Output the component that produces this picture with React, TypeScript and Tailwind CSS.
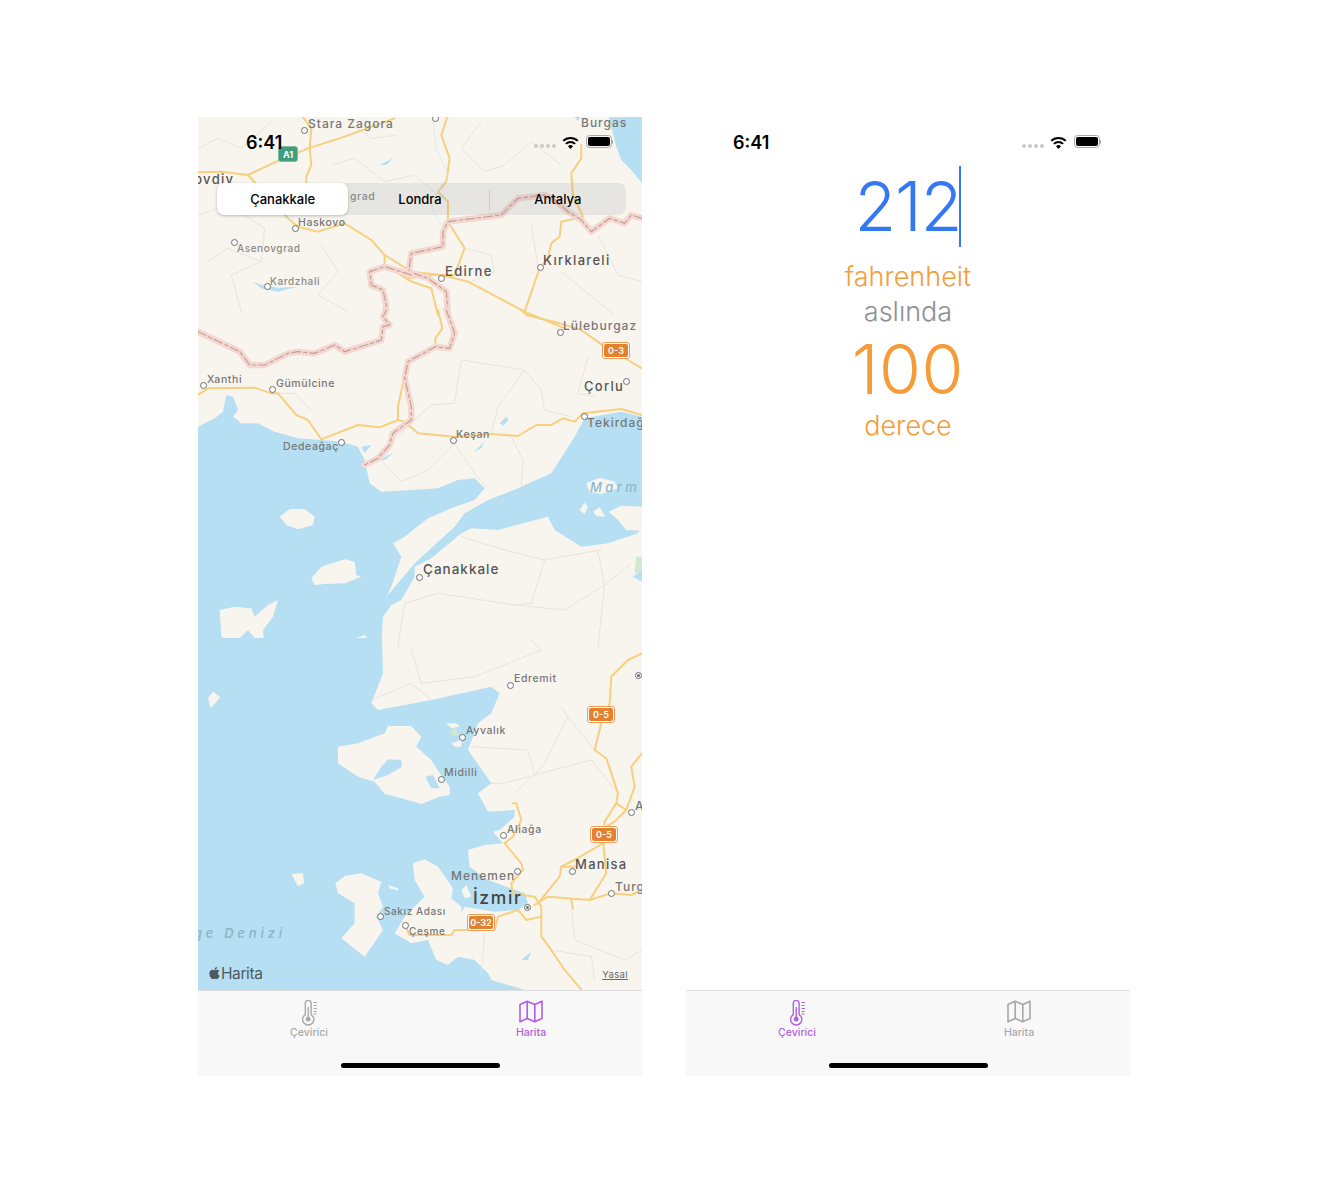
import { FaApple } from "react-icons/fa";

type MapLabel = { text: string; x: number; y: number; size?: number; cls?: string };
type Pin = { x: number; y: number; target?: boolean };

// all page coordinates, the map starts at 198,117
const labels: MapLabel[] = [
    { text: "Stara Zagora", x: 308, y: 124, size: 12 },
    { text: "Burgas", x: 581, y: 123, size: 12 },
    { text: "Plovdiv", x: 180, y: 179, size: 13, cls: "text-[#555]" },
    { text: "grad", x: 350, y: 197, size: 10.5, cls: "text-[#8f8f8c]" },
    { text: "Haskovo", x: 298, y: 223, size: 10.5 },
    { text: "Asenovgrad", x: 237, y: 248, size: 10, cls: "text-[#8a8a88]" },
    { text: "Kardzhali", x: 270, y: 281, size: 10, cls: "text-[#8a8a88]" },
    { text: "Edirne", x: 445, y: 271, size: 13, cls: "text-[#555]" },
    { text: "Kırklareli", x: 543, y: 260, size: 13, cls: "text-[#555]" },
    { text: "Lüleburgaz", x: 563, y: 326, size: 12 },
    { text: "Çorlu", x: 584, y: 386, size: 13, cls: "text-[#555]" },
    { text: "Xanthi", x: 207, y: 380, size: 10.5 },
    { text: "Gümülcine", x: 276, y: 384, size: 10.5 },
    { text: "Keşan", x: 456, y: 435, size: 10.5 },
    { text: "Tekirdağ", x: 587, y: 423, size: 12 },
    { text: "Dedeağaç", x: 283, y: 447, size: 10.5 },
    { text: "Çanakkale", x: 423, y: 570, size: 13.5, cls: "text-[#555]" },
    { text: "Edremit", x: 514, y: 679, size: 10.5 },
    { text: "Ayvalık", x: 466, y: 731, size: 10.5 },
    { text: "Midilli", x: 444, y: 773, size: 10.5 },
    { text: "Aliağa", x: 507, y: 830, size: 10.5 },
    { text: "Manisa", x: 575, y: 864, size: 13, cls: "text-[#555]" },
    { text: "Menemen", x: 451, y: 876, size: 12 },
    { text: "İzmir", x: 473, y: 898, size: 17.5, cls: "text-[#444]" },
    { text: "Turgutlu", x: 615, y: 887, size: 12 },
    { text: "Akhisar", x: 635, y: 806, size: 12 },
    { text: "Sakız Adası", x: 384, y: 911, size: 10 },
    { text: "Çeşme", x: 409, y: 931, size: 10 },
];

const pins: Pin[] = [
    { x: 304, y: 130 }, { x: 435, y: 118 }, { x: 295, y: 228 }, { x: 234, y: 242 },
    { x: 267, y: 286 }, { x: 441, y: 278 }, { x: 540, y: 267 }, { x: 560, y: 332 },
    { x: 626, y: 381 }, { x: 203, y: 385 }, { x: 272, y: 389 }, { x: 453, y: 440 },
    { x: 584, y: 416 }, { x: 341, y: 442 }, { x: 419, y: 577 }, { x: 510, y: 685 },
    { x: 462, y: 737 }, { x: 441, y: 779 }, { x: 503, y: 835 }, { x: 572, y: 871 },
    { x: 517, y: 871 }, { x: 611, y: 893 }, { x: 631, y: 812 }, { x: 380, y: 916 },
    { x: 405, y: 925 }, { x: 527, y: 907, target: true }, { x: 638, y: 675, target: true },
];

const shields = [
    { text: "0-3", x: 616, y: 350, w: 28 },
    { text: "0-5", x: 601, y: 714, w: 28 },
    { text: "0-5", x: 604, y: 834, w: 28 },
    { text: "0-32", x: 481, y: 922, w: 28 },
];

const ROAD = "#f6cf7f";
const GRID = "#e7e4dc";

// wider spacing on the bigger city names
const spacing = (size = 10) => (size >= 17 ? 1.6 : size === 13 ? 1.3 : size >= 12 ? 1 : 0.6);

const Line = ({ p, c = ROAD, w = 6, dash }: { p: string; c?: string; w?: number; dash?: string }) => (
    <polyline points={p} fill="none" stroke={c} strokeWidth={w} strokeLinejoin="round" strokeLinecap="round" strokeDasharray={dash} />
);

const Border = ({ p }: { p: string }) => (
    <>
        <Line p={p} c="#f3d8d2" w={19} />
        <Line p={p} c="#c99c92" w={3.5} dash="26 9 10 9" />
    </>
);

const MapArt = () => (
    <svg className="absolute inset-0 w-[444px] h-[873px] blur-[0.4px]" viewBox="0 0 444 873">
        <rect x="-5" y="-5" width="454" height="883" fill="#f8f5ef" />

        {/* top part, north of the coast */}
        <g transform="translate(0,-2) scale(0.3333)">
            <polygon points="1232,0 1238,30 1255,95 1270,135 1300,165 1332,205 1332,0" fill="#b6dff3" />
            <polygon points="1125,0 1150,0 1140,18" fill="#b6dff3" />
            <polygon points="545,150 585,130 565,150" fill="#b6dff3" />
            <polygon points="165,500 190,520 240,530 300,515 240,518 190,510" fill="#b6dff3" />
            <Line p="0,100 60,70 130,100 220,20" c={GRID} w={3} />
            <Line p="400,150 470,130 560,200 650,180 720,240" c={GRID} w={3} />
            <Line p="850,20 790,100 860,170 920,150 1000,80 1090,150" c={GRID} w={3} />
            <Line p="0,300 90,270 200,340 190,440 100,480 130,590" c={GRID} w={3} />
            <Line p="370,390 420,470 360,540 450,590" c={GRID} w={3} />
            <Line p="800,400 880,420 890,470 820,500" c={GRID} w={3} />
            <Line p="1000,330 1020,450" c={GRID} w={3} />
            <Line p="1200,360 1260,480 1332,500" c={GRID} w={3} />
            <Line p="1090,470 1200,560 1250,600" c={GRID} w={3} />
            <Line p="450,20 520,70 600,60" c={GRID} w={3} />
            <Line p="30,440 90,400 190,440" c={GRID} w={3} />
            <Line p="0,172 70,170 150,180 235,140 330,100 440,65 590,10" />
            <Line p="310,0 340,40 335,100 340,150 325,185 325,290" />
            <Line p="150,180 270,310 300,335 360,350 440,325 520,375 560,420 640,470 730,480" />
            <Line p="750,0 730,60 755,130 745,200 720,230 750,260 750,320 800,400 770,480 700,480 630,490" />
            <Line p="1150,90 1150,130 1120,175 1125,240 1155,305 1090,320 1085,365 1060,385 1050,430 1025,460 980,590" />
            <Line p="730,480 810,500 980,590 1100,640" />
            <Line p="560,420 560,450 640,500 700,520 720,600" />
            <Line p="705,20 715,100 750,180 720,230 700,280 730,330" c="#cfe6f2" w={2} />
            <Border p="1332,310 1300,300 1280,325 1235,310 1180,350 1150,315 1110,290 1070,255 1040,240 960,250 910,300 830,310 750,320 735,350 735,395 640,415 632,470 690,490 745,530 750,600" />
            <Border p="640,480 560,455 515,470 520,510 555,525 565,570 560,600" />
        </g>

        {/* middle part, Saros, Gelibolu and Marmara */}
        <g transform="translate(0,193) scale(0.3333)">
            <polygon fill="#b6dff3" points="0,350 50,325 75,305 85,255 105,260 120,300 105,320 130,340 180,340 230,365 300,385 370,390 430,395 480,410 500,450 515,520 550,545 640,540 720,535 780,510 830,505 860,535 830,570 760,595 690,625 620,680 585,700 610,740 580,830 565,860 600,820 650,760 770,650 800,610 870,570 960,535 1060,490 1130,380 1160,325 1270,305 1332,320 1332,650 1320,670 1230,700 1150,710 1070,660 1050,620 900,660 820,655 790,670 700,745 650,770 650,800 610,870 580,885 555,920 550,1010 0,1010" />
            <polygon fill="#f8f5ef" points="245,620 275,597 320,597 350,620 345,645 300,658 265,645" />
            <polygon fill="#f8f5ef" points="340,805 370,770 440,748 470,755 475,795 490,800 440,820 380,822 350,825" />
            <polygon fill="#f8f5ef" points="65,900 110,890 160,895 170,920 210,885 240,870 225,920 195,960 200,1010 170,985 150,960 110,1000 70,980" />
            <polygon fill="#f8f5ef" points="470,985 500,975 522,1000 520,1010 500,1000" />
            <polygon fill="#f8f5ef" points="1165,520 1205,503 1250,515 1260,535 1210,552 1175,545" />
            <polygon fill="#f8f5ef" points="1145,600 1160,578 1170,590 1160,612" />
            <polygon fill="#f8f5ef" points="1185,605 1205,592 1222,620 1195,618" />
            <polygon fill="#f8f5ef" points="1232,605 1270,587 1332,590 1332,662 1285,660 1260,630" />
            <polygon fill="#b6dff3" points="905,340 925,320 932,330 915,347" />
            <polygon fill="#b6dff3" points="828,425 860,395 850,415" />
            <polygon fill="#b6dff3" points="490,410 520,405 500,430" />
            <polygon fill="#b6dff3" points="545,450 590,425 560,450" />
            <polygon fill="#cfe8d0" points="1315,740 1332,740 1332,785 1310,790" />
            <polygon fill="#b6dff3" points="1305,800 1332,780 1332,815" />
            <Line p="700,285 640,340 540,440 610,515 690,480 770,400 830,490 865,530" c={GRID} w={3} />
            <Line p="790,150 770,280 700,285" c={GRID} w={3} />
            <Line p="790,150 980,180 1030,240 1040,300 1120,320" c={GRID} w={3} />
            <Line p="980,180 900,290 880,370" c={GRID} w={3} />
            <Line p="940,380 975,450 970,530" c={GRID} w={3} />
            <Line p="1170,140 1140,250 1190,260" c={GRID} w={3} />
            <Line p="340,300 290,250 240,250" c={GRID} w={3} />
            <Line p="790,680 920,720 1040,750 1210,720" c={GRID} w={3} />
            <Line p="1040,750 1000,880 950,885 720,850 620,880 600,1010" c={GRID} w={3} />
            <Line p="950,885 1100,900 1220,825 1300,760" c={GRID} w={3} />
            <Line p="1200,725 1220,825 1200,1010" c={GRID} w={3} />
            <Line p="970,0 985,15 1085,40 1150,60 1220,110 1290,150 1332,175" />
            <Line p="0,255 30,235 170,233 220,250 240,250 295,315 330,330 370,388 480,345 545,352 600,330 620,335 660,370 770,380 880,372 960,378 1015,345 1060,345 1095,325 1130,335 1155,310 1270,297 1332,315" />
            <Line p="720,0 733,55 712,85 712,110 630,150 600,290 600,330" />
            <Border p="745,0 770,70 755,115 712,110 630,155 620,205 640,290 640,330 585,370 575,405 540,445 500,465" />
            <Border p="0,65 125,125 155,165 200,165 270,130 300,125 350,130 410,105 440,125 520,100 550,90 555,50 575,45 555,20 565,0" />
        </g>

        {/* south part, Midilli down to Izmir */}
        <g transform="translate(0,523) scale(0.3333)">
            <polygon fill="#b6dff3" points="0,-6 552,-6 555,100 520,190 540,210 700,180 880,140 905,160 880,220 840,250 810,330 880,430 840,460 870,515 950,510 950,530 905,570 885,575 915,610 860,615 810,630 815,680 870,720 980,760 990,790 960,810 890,815 800,800 785,830 790,870 830,960 870,1000 880,1020 980,1050 0,1050" />
            <polygon fill="#f8f5ef" points="30,175 45,155 67,172 38,205" />
            <polygon fill="#f8f5ef" points="280,702 315,700 318,730 300,738" />
            <polygon fill="#f8f5ef" points="420,320 480,310 560,280 570,258 640,258 670,290 655,320 700,360 725,400 755,440 755,465 725,470 670,492 610,475 560,462 530,425 480,410 420,370" />
            <polygon fill="#b6dff3" points="525,420 550,380 570,358 610,360 612,380 570,405" />
            <polygon fill="#b6dff3" points="682,410 705,405 725,445 700,445" />
            <polygon fill="#f8f5ef" points="412,730 440,708 490,700 550,725 540,760 555,800 535,830 555,870 500,950 430,895 470,850 470,790 420,760" />
            <polygon fill="#f8f5ef" points="570,735 600,745 600,752 575,745" />
            <polygon fill="#f8f5ef" points="645,670 680,658 720,680 765,745 760,775 790,800 790,870 830,960 780,950 750,975 715,960 690,900 640,910 590,880 620,830 660,790 680,770 650,720" />
            <polygon fill="#f8f5ef" points="790,750 805,735 820,770 800,775" />
            <polygon fill="#f8f5ef" points="745,250 775,250 785,260 760,265" />
            <polygon fill="#cfe8d0" points="758,270 775,265 782,285 765,288" />
            <polygon fill="#f8f5ef" points="760,310 790,300 790,320 770,320" />
            <polygon fill="#b6dff3" points="970,960 1000,935 990,960" />
            <Line p="520,180 640,130 700,180" c={GRID} w={3} />
            <Line p="640,30 670,130 830,110 1030,30 1000,0" c={GRID} w={3} />
            <Line p="1110,230 1040,370 1010,405 920,430 880,430" c={GRID} w={3} />
            <Line p="820,320 990,330 1010,405" c={GRID} w={3} />
            <Line p="1010,405 1180,360 1260,460" c={GRID} w={3} />
            <Line p="1090,200 1110,230 1190,330" c={GRID} w={3} />
            <Line p="950,460 1000,410" c={GRID} w={3} />
            <Line p="1120,790 1130,900 1280,960 1332,930" c={GRID} w={3} />
            <Line p="1060,930 1180,950 1190,1020" c={GRID} w={3} />
            <Line p="860,880 850,1000" c={GRID} w={3} />
            <Line p="1332,40 1290,60 1240,110 1235,190 1210,250 1190,330 1225,355 1260,460 1255,490 1220,545 1215,600 1225,700 1175,780 1050,770 1010,795" />
            <Line p="1332,340 1300,380 1310,440 1285,510 1255,490" />
            <Line p="1285,510 1250,545 1215,565" />
            <Line p="1215,610 1130,660 1090,680 1085,710 1020,790" />
            <Line p="1090,680 1130,680" />
            <Line p="1240,760 1175,780" />
            <Line p="1240,760 1300,765 1332,750" />
            <Line p="945,490 955,490 970,540 945,590 920,610 970,670 975,690 940,730 945,760 1010,770 1030,800 1030,890 1060,930 1100,990 1150,1048" />
            <Line p="620,855 635,885 760,885 770,870 890,870 900,830 960,810 985,840 1030,830" />
            <Line p="1120,780 1125,805" />
        </g>
    </svg>
);

const MapPin = ({ x, y, target }: Pin) => (
    <span
        className="absolute w-[7px] h-[7px] rounded-full border border-[#6d6d6d] bg-white flex items-center justify-center"
        style={{ left: x - 201.5, top: y - 120.5 }}
    >
        {target && <span className="w-[3px] h-[3px] rounded-full bg-[#6d6d6d]" />}
    </span>
);

const Shield = ({ text, x, y, w }: { text: string; x: number; y: number; w: number }) => (
    <span
        className="absolute h-[17px] rounded-[3px] border border-[#ef9a56] bg-white p-px flex"
        style={{ left: x - 198 - w / 2, top: y - 117 - 8.5, width: w }}
    >
        <span className="flex-1 rounded-[2px] bg-[#e4812f] text-white text-[9px] font-semibold flex items-center justify-center leading-none">{text}</span>
    </span>
);

const StatusIcons = () => (
    <div className="flex items-center -mt-[2px]">
        <div className="flex gap-[2px] mt-[8px] mr-[6px]">
            <span className="w-[4px] h-[4px] rounded-full bg-[#c9c9c9]" />
            <span className="w-[4px] h-[4px] rounded-full bg-[#c9c9c9]" />
            <span className="w-[4px] h-[4px] rounded-full bg-[#c9c9c9]" />
            <span className="w-[4px] h-[4px] rounded-full bg-[#c9c9c9]" />
        </div>
        <svg width="17" height="14" viewBox="0 0 17 14" className="mr-[7px]">
            <path d="M8.5 14 6 11.2a3.6 3.6 0 0 1 5 0Z" fill="#000" />
            <path d="M3.9 8.9a6.6 6.6 0 0 1 9.2 0" fill="none" stroke="#000" strokeWidth="2" />
            <path d="M1.2 5.9a10.5 10.5 0 0 1 14.6 0" fill="none" stroke="#000" strokeWidth="2" />
        </svg>
        <div className="w-[26px] h-[13px] rounded-[3.5px] border border-[#a8a8a8] p-px">
            <div className="w-full h-full rounded-[2px] bg-black" />
        </div>
        <span className="w-[1.5px] h-[4px] bg-[#a8a8a8] rounded-r-sm" />
    </div>
);

const ThermoIcon = ({ color }: { color: string }) => (
    <svg width="18" height="26" viewBox="0 0 18 26" fill="none" stroke={color}>
        <path d="M3.3 14.6V3.3a2.9 2.9 0 0 1 5.8 0v11.3a5.6 5.6 0 1 1-5.8 0Z" strokeWidth="1.4" />
        <circle cx="6.2" cy="19.2" r="2.4" fill={color} stroke="none" />
        <path d="M6.2 18V7" strokeWidth="1.4" />
        <path d="M11.5 2.5h3.5M11.5 5.5h3M11.5 8.5h3.5M11.5 11.5h3M11.5 14h3" strokeWidth="1" />
    </svg>
);

const MapIcon = ({ color }: { color: string }) => (
    <svg width="24" height="23" viewBox="0 0 24 23" fill="none" stroke={color} strokeWidth="1.6" strokeLinejoin="round">
        <path d="M1 4.5 8.2 1.2l7.6 3.3 7.2-3.3v17.3l-7.2 3.3-7.6-3.3L1 21.8Z" />
        <path d="M8.2 1.2v17.3M15.8 4.5v17.3" />
    </svg>
);

const TabBar = ({ active }: { active: "converter" | "map" }) => {
    const on = "#b15fe3";
    const off = "#a8a8a8";
    return (
        <div className="h-[86px] shrink-0 bg-[#f8f8f8] border-t border-[#dcdcdc] relative">
            <div className="grid grid-cols-2">
                <div className="flex flex-col items-center pt-[9px] w-[222px]">
                    <div className="h-[26px] pl-[3px]"><ThermoIcon color={active === "converter" ? on : off} /></div>
                    <span className={`text-[10.5px] leading-[14px] font-medium ${active === "converter" ? "text-[#b15fe3]" : "text-[#a8a8a8]"}`}>Çevirici</span>
                </div>
                <div className="flex flex-col items-center pt-[9px] w-[222px]">
                    <div className="h-[26px]"><MapIcon color={active === "map" ? on : off} /></div>
                    <span className={`text-[10.5px] leading-[14px] font-medium ${active === "map" ? "text-[#b15fe3]" : "text-[#a8a8a8]"}`}>Harita</span>
                </div>
            </div>
            <div className="absolute bottom-[8px] left-[143px] w-[159px] h-[5px] rounded-full bg-black" />
        </div>
    );
};

const App = () => {
    return (
        <div className="w-full min-h-[1200px] bg-white pl-[198px] pt-[117px] flex gap-[44px] font-['Inter','Liberation_Sans',sans-serif]">
            {/* map screen */}
            <div className="w-[444px] h-[959px] flex flex-col">
                <div className="relative flex-1 overflow-hidden bg-[#f8f5ef]">
                    <MapArt />
                    {pins.map((p) => (
                        <MapPin key={`${p.x}-${p.y}`} {...p} />
                    ))}
                    {labels.map((l) => (
                        <span
                            key={l.text}
                            className={`absolute whitespace-nowrap leading-none font-medium -translate-y-1/2 ${l.cls ?? "text-[#777]"}`}
                            style={{ left: l.x - 198, top: l.y - 117, fontSize: l.size, letterSpacing: spacing(l.size) }}
                        >
                            {l.text}
                        </span>
                    ))}
                    <span className="absolute left-[392px] top-[362px] text-[13px] italic font-medium tracking-[3.4px] text-[#8fb8cc] leading-[16px]">Marm</span>
                    <span className="absolute left-[-16px] top-[808px] text-[13px] italic font-semibold tracking-[3.8px] text-[#90b7cb] leading-[16px] whitespace-nowrap">Ege Denizi</span>
                    {shields.map((s) => (
                        <Shield key={`${s.x}-${s.y}`} {...s} />
                    ))}
                    <span className="absolute left-[80px] top-[29px] w-[20px] h-[16px] rounded-[3px] border border-[#7fbda4] bg-[#3f9f7c] text-white text-[9px] font-bold flex items-center justify-center leading-none">A1</span>

                    {/* status bar */}
                    <div className="absolute top-[17px] left-[48px] right-[29px] flex items-center justify-between h-[17px]">
                        <span className="text-[18px] font-semibold text-black leading-none">6:41</span>
                        <StatusIcons />
                    </div>

                    {/* city picker */}
                    <div className="absolute left-[19px] top-[66px] w-[409px] h-[32px] rounded-[8px] bg-[#7676801f] grid grid-cols-3 text-[13px] font-medium text-black">
                        <div className="relative flex items-center justify-center">
                            <div className="absolute left-0 top-0 bottom-[2px] w-[131px] bg-white rounded-[7px] shadow-[0_1px_3px_rgba(0,0,0,0.25)]" />
                            <span className="relative -ml-[5px]">Çanakkale</span>
                        </div>
                        <div className="flex items-center justify-center border-r border-[#cfcdc8] my-[7px] pr-[2px]">Londra</div>
                        <div className="flex items-center justify-center">Antalya</div>
                    </div>

                    <div className="absolute left-[10px] bottom-[9px] flex items-center text-[#4d5a64]">
                        <FaApple className="w-[13px] h-[14px]" />
                        <span className="text-[15.5px] tracking-[-0.4px] leading-none">Harita</span>
                    </div>
                    <span className="absolute right-[14px] bottom-[11px] text-[9.5px] tracking-[0.4px] text-[#666] underline leading-none">Yasal</span>
                </div>
                <TabBar active="map" />
            </div>

            {/* converter screen */}
            <div className="w-[444px] h-[959px] flex flex-col">
                <div className="flex-1 flex flex-col">
                    <div className="flex items-center justify-between h-[17px] mt-[17px] pl-[47px] pr-[29px]">
                        <span className="text-[18px] font-semibold text-black leading-none">6:41</span>
                        <StatusIcons />
                    </div>
                    <div className="flex flex-col items-center">
                        <div className="relative mt-[15px] h-[80px] flex items-center">
                            <span className="text-[68px] leading-[80px] font-[350] text-[#3478f6] tracking-[-1px]">212</span>
                            <span className="absolute right-[1px] top-0 w-[2px] h-[81px] bg-[#3478f6]" />
                        </div>
                        <span className="mt-[13px] text-[27px] leading-[36px] font-[350] text-[#f59c39]">fahrenheit</span>
                        <span className="text-[27px] leading-[34px] font-[350] text-[#8e8e93]">aslında</span>
                        <span className="text-[68px] leading-[80px] font-[350] text-[#f59c39] tracking-[0.5px]">100</span>
                        <span className="text-[27px] leading-[34px] font-[350] text-[#f59c39]">derece</span>
                    </div>
                </div>
                <TabBar active="converter" />
            </div>
        </div>
    );
};

export default App;
